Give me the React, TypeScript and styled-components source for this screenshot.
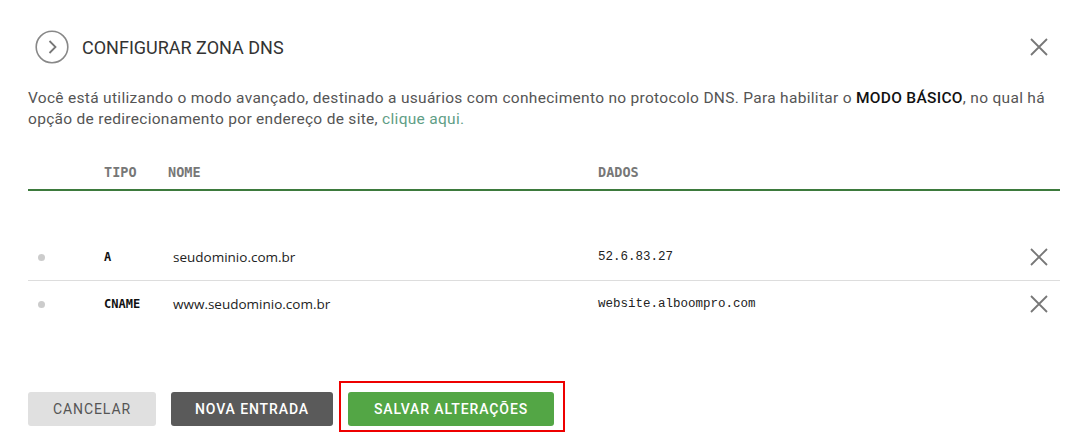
import React from 'react'
import styled, { createGlobalStyle } from 'styled-components'

const GlobalStyle = createGlobalStyle`
  body {
    margin: 0;
    background: #fff;
    font-family: Roboto, "Liberation Sans", sans-serif;
  }
`

interface DnsRecord {
  tipo: string
  nome: string
  dados: string
}

const records: DnsRecord[] = [
  { tipo: 'A', nome: 'seudominio.com.br', dados: '52.6.83.27' },
  { tipo: 'CNAME', nome: 'www.seudominio.com.br', dados: 'website.alboompro.com' },
]

const CloseIcon = ({ size = 18 }: { size?: number }) => (
  <svg width={size} height={size} viewBox="0 0 18 18">
    <path d="M1 1 L17 17 M17 1 L1 17" stroke="#777" strokeWidth="1.8" fill="none" />
  </svg>
)

export default function App() {
  return (
    <>
      <GlobalStyle />
      <Page>
        <Header>
          <TitleGroup>
            <svg width="34" height="34" viewBox="0 0 34 34">
              <circle cx="17" cy="17" r="15.8" stroke="#888" strokeWidth="1.6" fill="none" />
              <path d="M14.5 11 L20.5 17 L14.5 23" stroke="#777" strokeWidth="1.8" fill="none" />
            </svg>
            <Title>CONFIGURAR ZONA DNS</Title>
          </TitleGroup>
          <IconButton><CloseIcon /></IconButton>
        </Header>

        <Description>
          Você está utilizando o modo avançado, destinado a usuários com conhecimento no protocolo DNS. Para habilitar o <strong>MODO BÁSICO</strong>, no qual há<br />
          opção de redirecionamento por endereço de site, <Link>clique aqui.</Link>
        </Description>

        <Table>
          <HeadRow>
            <span />
            <HeadCell>TIPO</HeadCell>
            <HeadCell>NOME</HeadCell>
            <HeadCell>DADOS</HeadCell>
            <span />
          </HeadRow>
          <EmptyRow />
          {records.map((r, i) => (
            <Row key={r.nome} $last={i === records.length - 1}>
              <Dot />
              <TypeCell>{r.tipo}</TypeCell>
              <NameCell>{r.nome}</NameCell>
              <DataCell>{r.dados}</DataCell>
              <IconButton><CloseIcon /></IconButton>
            </Row>
          ))}
        </Table>

        <Actions>
          <Button $variant="light">CANCELAR</Button>
          <Button $variant="dark">NOVA ENTRADA</Button>
          <Highlight>
            <Button $variant="green">SALVAR ALTERAÇÕES</Button>
          </Highlight>
        </Actions>
      </Page>
    </>
  )
}

const Page = styled.div`
  padding: 30px 29px 15px 28px;
`
const Header = styled.div`
  display: flex;
  justify-content: space-between;
  align-items: center;
`
const TitleGroup = styled.div`
  display: flex;
  align-items: center;
  gap: 13px;
  padding-left: 7px;
`
const Title = styled.h1`
  margin: 0;
  font-size: 18px;
  font-weight: 400;
  color: #333;
`
const IconButton = styled.div`
  display: flex;
  align-items: center;
  justify-content: center;
  width: 22px;
  height: 22px;
  margin-right: 10px;
  justify-self: end;
  cursor: pointer;
`
const Description = styled.p`
  margin: 24px 0 0 0;
  font-size: 15.5px;
  letter-spacing: 0.3px;
  line-height: 21px;
  color: #555;
  white-space: nowrap;

  strong {
    color: #111;
    font-weight: 500;
  }
`
const Link = styled.a`
  color: #5f9e86;
  cursor: pointer;
`
const Table = styled.div`
  margin-top: 22px;
`
const columns = `76px 64px 430px 1fr 40px`
const HeadRow = styled.div`
  display: grid;
  grid-template-columns: ${columns};
  align-items: center;
  height: 35px;
  padding-top: 2px;
  border-bottom: 2px solid #3d7a3d;
`
const HeadCell = styled.span`
  font-family: "DejaVu Sans Mono", "Liberation Mono", monospace;
  font-weight: 700;
  font-size: 13.5px;
  color: #777;
`
const EmptyRow = styled.div`
  height: 43px;
`
const Row = styled.div<{ $last?: boolean }>`
  display: grid;
  grid-template-columns: ${columns};
  align-items: center;
  height: 46px;
  border-bottom: ${p => (p.$last ? 'none' : '1px solid #ddd')};
`
const Dot = styled.span`
  width: 7px;
  height: 7px;
  border-radius: 50%;
  background: #ccc;
  margin-left: 10px;
`
const TypeCell = styled.span`
  font-family: "DejaVu Sans Mono", monospace;
  font-weight: 700;
  font-size: 12px;
  color: #111;
`
const NameCell = styled.span`
  font-family: "Open Sans", sans-serif;
  font-size: 13.5px;
  color: #222;
  padding-left: 5px;
`
const DataCell = styled.span`
  font-family: "Liberation Mono", monospace;
  font-size: 12.5px;
  color: #222;
`
const Actions = styled.div`
  display: flex;
  align-items: center;
  gap: 15px;
  margin-top: 65px;
`
const Highlight = styled.div`
  display: flex;
  border: 2px solid #e00;
  padding: 9px 9px 4px 7px;
  margin: -11px 0 -6px -9px;
`
const Button = styled.button<{ $variant: 'light' | 'dark' | 'green' }>`
  height: 34px;
  border: none;
  border-radius: 3px;
  font-family: Roboto, sans-serif;
  font-size: 14px;
  font-weight: ${p => (p.$variant === 'light' ? 400 : 500)};
  letter-spacing: 0.9px;
  cursor: pointer;
  width: ${p => (p.$variant === 'light' ? '128px' : p.$variant === 'dark' ? '162px' : '206px')};
  background: ${p => (p.$variant === 'light' ? '#e0e0e0' : p.$variant === 'dark' ? '#5a5a5a' : '#53a645')};
  color: ${p => (p.$variant === 'light' ? '#555' : '#fff')};
`
